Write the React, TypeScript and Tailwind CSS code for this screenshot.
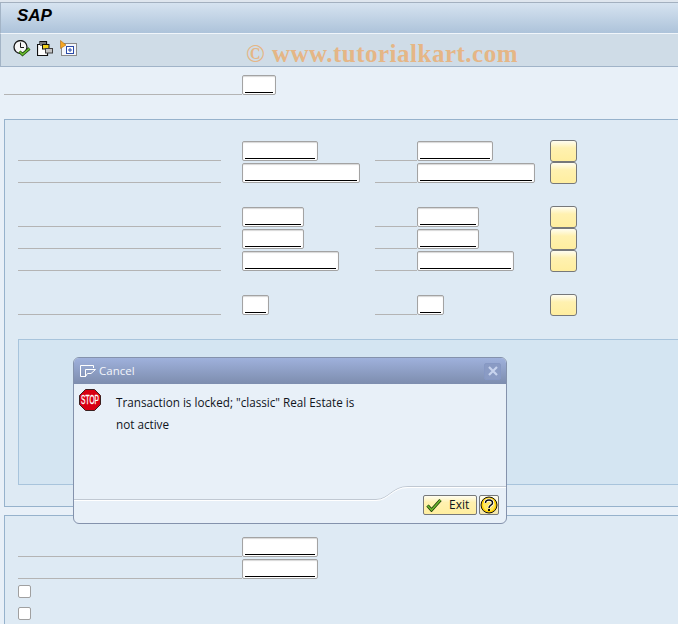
import React from "react";

function Field({ w }: { w: string }) {
  return (
    <div className={`${w} h-[20px] mt-px border border-[#a3a3a3] rounded-[2px] bg-white shadow-[inset_0_1px_1px_#d8d8d8] flex items-end px-[2px] pb-[1px] shrink-0`}>
      <div className="h-px w-full bg-black" />
    </div>
  );
}

function YellowButton() {
  return <div className="w-[27px] h-[22px] rounded-[3px] border border-[#76787a] bg-gradient-to-b from-[#fffdf0] via-[#fff1b0] via-35% to-[#ffee9f] shrink-0" />;
}

function Row({ a, b }: { a: string; b: string }) {
  return (
    <div className="flex h-[22px] items-start">
      <div className="w-[203px] h-[21px] border-b border-[#b4b4b4] shrink-0" />
      <div className="w-[21px] shrink-0" />
      <div className="w-[133px] shrink-0"><Field w={a} /></div>
      <div className="w-[42px] h-[21px] border-b border-[#b4b4b4] shrink-0" />
      <div className="w-[133px] shrink-0"><Field w={b} /></div>
      <YellowButton />
    </div>
  );
}

function SingleRow({ w }: { w: string }) {
  return (
    <div className="flex h-[22px] items-start">
      <div className="w-[224px] h-[21px] border-b border-[#b4b4b4] shrink-0" />
      <Field w={w} />
    </div>
  );
}

function Check() {
  return <div className="w-[13px] h-[13px] border border-[#a0a0a0] rounded-[2px] bg-white" />;
}

function ClockIcon() {
  return (
    <svg width="18" height="17" viewBox="0 0 18 17">
      <circle cx="7.5" cy="7" r="6.5" fill="#f6f6f6" stroke="#181818" strokeWidth="1.3" />
      <path d="M7.5 2.5V7.5H11" fill="none" stroke="#181818" strokeWidth="1" />
      <path d="M6.5 11.5L9.5 14.5L16.5 8.5" fill="none" stroke="#1e4a10" strokeWidth="3" />
      <path d="M6.5 11.5L9.5 14.5L16.5 8.5" fill="none" stroke="#6cc030" strokeWidth="1.5" />
    </svg>
  );
}

function CopyIcon() {
  return (
    <svg width="16" height="17" viewBox="0 0 16 17">
      <path d="M0.5 4.5H3V1.5H9.5V4.5H10.5V15.5H0.5Z" fill="#fff" stroke="#101010" strokeWidth="1.2" />
      <rect x="3" y="2" width="6" height="4" fill="#7a7a7a" />
      <rect x="5.5" y="4.5" width="6.5" height="4.5" fill="#f2d21a" stroke="#101010" />
      <rect x="8.5" y="8.5" width="7" height="4.5" fill="#c4c4c4" stroke="#404040" />
    </svg>
  );
}

function ExpandIcon() {
  return (
    <svg width="17" height="17" viewBox="0 0 17 17">
      <rect x="1.5" y="3.5" width="15" height="12" fill="#f4f6fa" stroke="#8a8a8a" />
      <rect x="6.5" y="6.5" width="7" height="7" fill="#fff" stroke="#2a4aa8" />
      <path d="M10 8V12M8 10H12" stroke="#2a4aa8" />
      <path d="M0.5 0.5L6 5L0.5 8.5Z" fill="#f5a623" stroke="#b06a10" strokeWidth="0.6" />
    </svg>
  );
}

function CancelIcon() {
  return (
    <svg width="16" height="13" viewBox="0 0 16 13">
      <path d="M13.5 3V0.5H0.5V11.5H6M5.5 4.5H15.5L11 8.5H7.5L5.5 11.5Z" fill="none" stroke="#ffffff" strokeWidth="1" />
    </svg>
  );
}

function StopIcon() {
  return (
    <svg width="22" height="22" viewBox="0 0 22 22">
      <path d="M6.5 0.5H15.5L21.5 6.5V15.5L15.5 21.5H6.5L0.5 15.5V6.5Z" fill="#d80012" stroke="#3a2020" />
      <text transform="scale(0.55 1)" x="20" y="15.5" textAnchor="middle" fontSize="12" fontFamily="'Liberation Sans',sans-serif" fill="#ffffff" stroke="#ffffff" strokeWidth="0.3">STOP</text>
    </svg>
  );
}

function HelpIcon() {
  return (
    <svg width="18" height="18" viewBox="0 0 18 18">
      <circle cx="9" cy="9" r="8" fill="#ffd000" stroke="#101010" />
      <circle cx="9" cy="9" r="6" fill="#ffe860" />
      <path d="M5.5 7C5.5 3 12.5 3 12.5 7C12.5 9.5 9 9 9 12" fill="none" stroke="#ffffff" strokeWidth="3" />
      <path d="M5.5 7C5.5 3 12.5 3 12.5 7C12.5 9.5 9 9 9 12" fill="none" stroke="#101010" strokeWidth="1.5" />
      <rect x="8" y="13" width="2" height="2" fill="#101010" />
    </svg>
  );
}

function CheckIcon() {
  return (
    <svg width="16" height="14" viewBox="0 0 16 14">
      <path d="M1.5 7.5L5.5 12L14.5 2" fill="none" stroke="#1c3a08" strokeWidth="3.2" />
      <path d="M1.5 7.5L5.5 12L14.5 2" fill="none" stroke="#6cb82c" strokeWidth="1.6" />
    </svg>
  );
}

export default function App() {
  return (
    <div className="relative w-[678px] h-[624px] overflow-hidden bg-[#e8f0f8] font-['Liberation_Sans',sans-serif]">
      <div className="h-[3px] bg-[#dfe6ee] border-b border-[#a3b0bf]" />
      <div className="h-[30px] bg-gradient-to-b from-[#d6e3f0] to-[#adc3da] flex items-start pt-[3px] pl-[16px] border-l border-[#a3b4c6]">
        <span className="italic font-bold text-[17px] leading-[20px] text-black">SAP</span>
      </div>
      <div className="h-[34px] bg-[#cfdce7] border-t border-[#f0f5fa] border-b border-b-[#a0b3c8] border-l border-l-[#a3b4c6] flex items-start pt-[6px] pl-[12px]">
        <ClockIcon />
        <div className="ml-[6px]"><CopyIcon /></div>
        <div className="ml-[7px]"><ExpandIcon /></div>
      </div>
      <span className="absolute left-[246px] top-[35px] font-['Liberation_Serif',serif] font-bold text-[25px] tracking-[0.5px] text-[#e8b27c] opacity-90 whitespace-nowrap">© www.tutorialkart.com</span>

      <div className="pl-[4px] pt-[7px]">
        <div className="flex h-[22px] items-start">
          <div className="w-[238px] h-[21px] border-b border-[#b4b4b4] shrink-0" />
          <Field w="w-[34px]" />
        </div>
      </div>

      <div className="ml-[4px] mt-[23px] h-[388px] border-t border-l border-b border-[#96b2cc] bg-[#deeaf4] pl-[13px] pt-[20px]">
        <Row a="w-[76px]" b="w-[76px]" />
        <Row a="w-[118px]" b="w-[118px]" />
        <div className="h-[22px]" />
        <Row a="w-[62px]" b="w-[62px]" />
        <Row a="w-[62px]" b="w-[62px]" />
        <Row a="w-[97px]" b="w-[97px]" />
        <div className="h-[22px]" />
        <Row a="w-[27px]" b="w-[27px]" />
        <div className="h-[146px] mt-[23px] border border-r-0 border-[#a8c4dc] bg-[#d4e5f2]" />
      </div>

      <div className="ml-[4px] mt-[8px] h-[120px] border-t border-l border-[#96b2cc] bg-[#deeaf4] pl-[13px] pt-[20px]">
        <SingleRow w="w-[76px]" />
        <SingleRow w="w-[76px]" />
        <div className="flex flex-col gap-[9px] pt-[5px]">
          <Check />
          <Check />
        </div>
      </div>

      <div className="absolute left-[73px] top-[357px] w-[434px] h-[167px] rounded-[6px] border border-[#8492ac] bg-[#e8f0f8] overflow-hidden flex flex-col">
        <div className="h-[26px] shrink-0 bg-gradient-to-b from-[#9fb1dc] to-[#7d8dae] flex items-center pl-[6px] pr-[5px] gap-[3px]">
          <CancelIcon />
          <span className="font-['Open_Sans',sans-serif] text-[11.5px] text-[#f2f5fb]">Cancel</span>
          <div className="ml-auto w-[17px] h-[17px] border border-[#8698c4] rounded-[2px] bg-[#8a9bc4] flex items-center justify-center">
            <svg width="10" height="10" viewBox="0 0 10 10"><path d="M1 1L9 9M9 1L1 9" stroke="#c8d4ee" strokeWidth="2.2" /></svg>
          </div>
        </div>
        <div className="flex flex-1 pl-[5px] pt-[5px]">
          <StopIcon />
          <div className="ml-[15px] w-[245px] pt-[2px] font-['Open_Sans',sans-serif] text-[11.7px] leading-[22px] text-[#10141c]">
            Transaction is locked; "classic" Real Estate is not active
          </div>
        </div>
        <svg className="absolute left-0 top-[127px]" width="432" height="16" viewBox="0 0 432 16">
          <path d="M0 14.5H302C315 14.5 318 1.5 334 1.5H432" fill="none" stroke="#c0c8d2" />
          <path d="M0 15.5H302C315 15.5 318 2.5 334 2.5H432" fill="none" stroke="#ffffff" />
        </svg>
        <div className="flex justify-end gap-[2px] pr-[7px] pb-[8px]">
          <div className="w-[54px] h-[20px] rounded-[2px] border border-[#76787a] bg-gradient-to-b from-[#fffdf0] via-[#fff1b0] via-35% to-[#ffee9f] flex items-center pl-[2px]">
            <CheckIcon />
            <span className="ml-[7px] font-['Open_Sans',sans-serif] text-[12px] text-[#10141c]">Exit</span>
          </div>
          <div className="w-[20px] h-[20px] rounded-[2px] border border-[#76787a] bg-gradient-to-b from-[#fffdf0] to-[#f4e6a8] flex items-center justify-center">
            <HelpIcon />
          </div>
        </div>
      </div>
    </div>
  );
}
